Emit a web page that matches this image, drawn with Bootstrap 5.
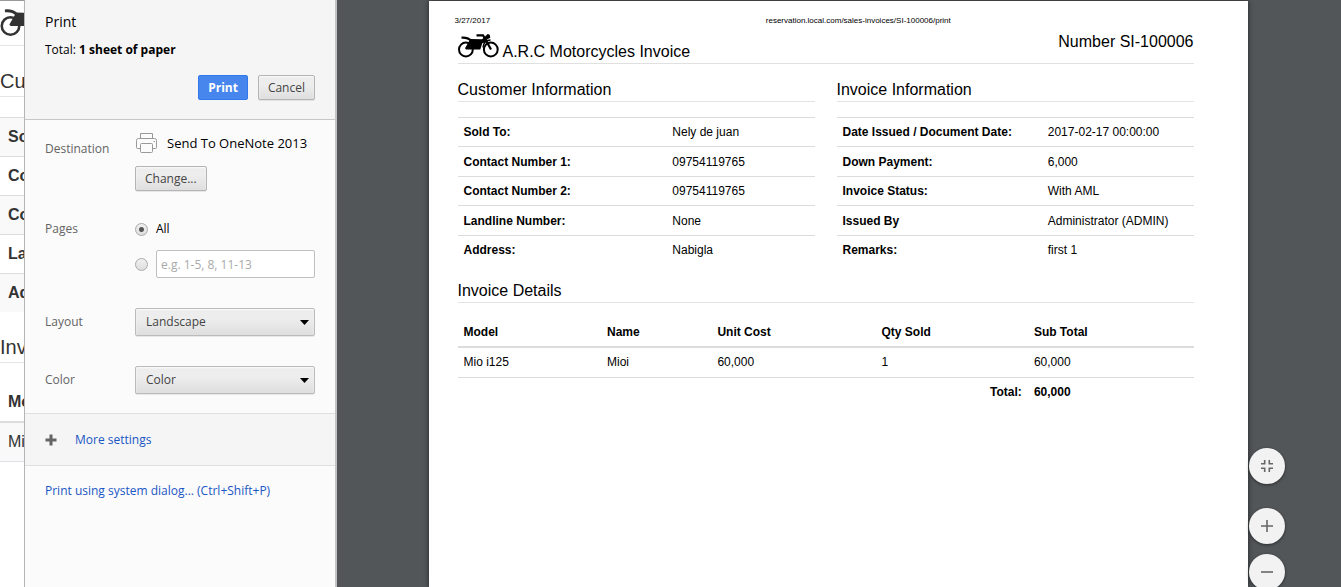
<!DOCTYPE html>
<html lang="en">
<head>
<meta charset="utf-8">
<meta name="viewport" content="width=device-width, initial-scale=1">
<title>Print</title>
<link href="https://cdn.jsdelivr.net/npm/bootstrap@5.3.0/dist/css/bootstrap.min.css" rel="stylesheet">
<style>
  body { font-family: "Open Sans", "Noto Sans", sans-serif; font-size: 12px; line-height: 18px; color: #000; }

  /* Page underneath the dialog */
  .under { width: 25px; border-top: 1px solid #999; border-right: 1px solid #b5b5b5; font-family: "Liberation Sans", sans-serif; color: #333; font-size: 16px; }
  .under-brand { height: 45px; padding-top: 4px; border-bottom: 1px solid #e5e5e5; }
  .under-brand svg { width: 53px; height: 33px; display: block; }
  .under-title { font-size: 20px; line-height: 30px; padding-top: 20px; border-bottom: 1px solid #e5e5e5; font-weight: 400; margin: 0; white-space: nowrap; }
  .under-rows { margin-top: 20px; }
  .under-row { height: 39px; line-height: 38px; padding-left: 8px; border-top: 1px solid #ddd; white-space: nowrap; }
  .under-row.shade { background: #f9f9f9; }
  .under-head { height: 60px; line-height: 38px; padding: 20px 0 0 8px; border-bottom: 2px solid #ddd; white-space: nowrap; }

  /* Print settings */
  .settings { width: 312px; background: #fbfbfb; border-right: 2px solid #c3c3c3; }
  .settings-top { background: #f5f5f5; border-bottom: 1px solid #c8c8c8; height: 120px; padding: 13px 20px 0; }
  .settings-top h1 { font-size: 14px; line-height: 18px; font-weight: 400; margin: 0 0 10px; }
  .actions { gap: 10px; margin-top: 16px; }
  .btn-dlg, .select-dlg { font-size: 12px; border: 1px solid #b4b4b4; border-radius: 2px; color: #444; background-color: #e8e8e8; background-image: linear-gradient(#ededed 38%, #dedede); box-shadow: 0 1px 0 rgba(0,0,0,.08), inset 0 1px 2px rgba(255,255,255,.75); text-align: left; }
  .btn-dlg { height: 25px; line-height: 21px; padding: 1px 9px; }
  .btn-go { font-weight: 700; color: #fff; background: #4787ed; border-color: #3079ed; box-shadow: none; }
  .field { padding: 0 20px; }
  .field-dest { padding-top: 8px; }
  .field-pages { margin-top: 29px; }
  .field-pick { margin-top: 30px; }
  .field-name { width: 90px; color: #646464; }
  .field-body { width: 180px; }
  .select-dlg { height: 28px; line-height: 18px; padding: 4px 10px; border-color: #bbb;
    background-image: url("data:image/svg+xml,%3Csvg xmlns='http://www.w3.org/2000/svg' viewBox='0 0 9 5'%3E%3Cpath d='M0 0h9L4.500 5z'/%3E%3C/svg%3E"), linear-gradient(#ededed 38%, #dedede);
    background-size: 9px 5px, 100% 100%; background-position: right 5px center, 0 0; background-repeat: no-repeat; }
  .radio-dlg { appearance: none; width: 13px; height: 13px; margin: 0; flex: none; border: 1px solid #aaa; border-radius: 50%; background: linear-gradient(#f0f0f0, #dedede); }
  .radio-dlg:checked { background: radial-gradient(circle, #555 0 2px, transparent 3px), linear-gradient(#f0f0f0, #dedede); }
  .range-box { width: 159px; height: 28px; padding: 3px 4px; font-size: 12px; border: 1px solid #bfbfbf; border-radius: 2px; }
  .range-box::placeholder { color: #a9a9a9; }
  .dest-name { font-size: 13px; gap: 9px; }
  .more { background: #f5f5f5; border-top: 1px solid #e0e0e0; border-bottom: 1px solid #e0e0e0; height: 53px; margin-top: 19px; padding: 0 20px; gap: 18px; }
  .settings a { color: #1a56c4; text-decoration: none; }

  /* Preview */
  .preview { background: #525659; padding: 1px 2px 0 0; }
  .sheet { width: 82%; max-width: 819px; background: #fff; box-shadow: 0 0 5px rgba(0,0,0,.6); font-family: "Liberation Sans", sans-serif; padding: 14px 54px 0 29px; }
  .run-head { display: grid; grid-template-columns: 11fr auto 9fr; font-size: 8px; line-height: 11px; margin: 0 -12px 0 -3px; }
  .sheet h2, .sheet h3 { font-size: 16px; line-height: 22px; margin: 0; font-weight: 400; }
  .sheet-brand { border-bottom: 1px solid #e0e0e0; height: 38px; }
  .sheet-brand svg { width: 41px; height: 26px; margin-top: 7px; }
  .sheet-brand span { padding-top: 15px; }
  .sheet-brand .number { padding-top: 5px; }
  .sheet h3 { border-bottom: 1px solid #e4e4e4; }
  .info-row { --bs-gutter-x: 22px; margin-top: 15px; }
  .inv { font-size: 12px; line-height: 18px; width: 100%; margin: 15px 0 0; table-layout: fixed; }
  .inv th, .inv td { padding: 0 6px; vertical-align: middle; }
  .facts { height: 147px; }
  .facts tr { border-top: 1px solid #dcdcdc; }
  .items { margin-top: 14px; }
  .items tr { height: 30px; }
  .items thead tr { border-bottom: 2px solid #dcdcdc; }
  .items tbody tr { border-bottom: 1px solid #dcdcdc; }

  .zoomers { right: 56px; top: 448px; }
  .zoomer { width: 36px; height: 36px; border: 0; border-radius: 50%; background: #f2f2f2; box-shadow: 0 1px 3px rgba(0,0,0,.5); padding: 0; }
  .zoomer + .zoomer { margin-top: 10px; }
  .zoomer.fit { margin-bottom: 14px; }
  .zoomer svg { width: 14px; height: 14px; display: block; margin: auto; }
</style>
</head>
<body>
<svg class="d-none">
  <symbol id="moto" viewBox="0 0 41 26">
    <g fill="none" stroke="currentColor">
      <circle cx="7.900" cy="16.500" r="6.900" stroke-width="2"/>
      <circle cx="32.800" cy="16.500" r="6.900" stroke-width="2"/>
      <path d="M3.500 4.600c4-.3 7 .3 9.500 3" stroke-width="2.200"/>
      <path d="M18.500 2.300h6.500l2 3.200 6 11" stroke-width="2.200"/>
      <path d="M25 14.500c.5-4 3-7.500 7.500-7.500" stroke-width="1.400"/>
    </g>
    <path fill="currentColor" d="M12 6l12 .3 3.300-3 2.400-2.300 2 .8.600 3-3 1.400-2 3-3 1-2 6.300H8l-1-1.200 4.200-7.300z"/>
  </symbol>
</svg>
<div class="d-flex vh-100 overflow-hidden">

  <div class="under flex-shrink-0 overflow-hidden">
    <div class="under-brand"><svg aria-hidden="true"><use href="#moto"/></svg></div>
    <h2 class="under-title">Cu</h2>
    <div class="under-rows fw-bold">
      <div class="under-row shade">So</div>
      <div class="under-row">Co</div>
      <div class="under-row shade">Co</div>
      <div class="under-row">La</div>
      <div class="under-row shade">Ad</div>
    </div>
    <h2 class="under-title">Inv</h2>
    <div class="under-head fw-bold">Mo</div>
    <div class="under-row shade border-top-0 border-bottom">Mi</div>
  </div>

  <form class="settings flex-shrink-0" onsubmit="return false">
    <div class="settings-top">
      <h1>Print</h1>
      <div>Total: <b>1 sheet of paper</b></div>
      <div class="actions d-flex justify-content-end">
        <button type="submit" class="btn btn-dlg btn-go">Print</button>
        <button type="button" class="btn btn-dlg">Cancel</button>
      </div>
    </div>

    <div class="field field-dest d-flex align-items-start">
      <div class="field-name pt-2 mt-1">Destination</div>
      <div class="field-body">
        <div class="dest-name d-flex align-items-center mb-2 pt-1">
          <svg width="23" height="22" viewBox="0 0 23 22" fill="#fbfbfb" stroke="#999" aria-hidden="true">
            <path d="M5.500 6.500v-5h12v5"/>
            <path d="M5.500 16.500h-3a1 1 0 0 1-1-1v-7q0-2 2-2h16q2 0 2 2v7a1 1 0 0 1-1 1h-3"/>
            <rect x="5.500" y="11.500" width="12" height="9" rx="1"/>
            <path d="M18.500 9.500h1.500"/>
          </svg>
          Send To OneNote 2013
        </div>
        <button type="button" class="btn btn-dlg mt-1">Change...</button>
      </div>
    </div>

    <div class="field field-pages d-flex">
      <div class="field-name">Pages</div>
      <div class="field-body">
        <div class="d-flex align-items-center gap-2">
          <input class="radio-dlg" type="radio" name="pages" id="all" checked>
          <label for="all">All</label>
        </div>
        <div class="d-flex align-items-center gap-2 mt-2 pt-1">
          <input class="radio-dlg" type="radio" name="pages" id="some" aria-label="Page range">
          <input class="form-control range-box" type="text" placeholder="e.g. 1-5, 8, 11-13" aria-label="Pages to print">
        </div>
      </div>
    </div>

    <div class="field field-pick d-flex align-items-center">
      <label class="field-name" for="layout">Layout</label>
      <select class="form-select select-dlg field-body" id="layout"><option>Landscape</option><option>Portrait</option></select>
    </div>
    <div class="field field-pick d-flex align-items-center">
      <label class="field-name" for="color">Color</label>
      <select class="form-select select-dlg field-body" id="color"><option>Color</option><option>Black and white</option></select>
    </div>

    <div class="more d-flex align-items-center">
      <svg width="12" height="12" viewBox="0 0 12 12" aria-hidden="true"><path d="M6 .500v11M.500 6h11" stroke="#646464" stroke-width="3"/></svg>
      <a href="#more">More settings</a>
    </div>
    <div class="field mt-3"><a href="#system">Print using system dialog... (Ctrl+Shift+P)</a></div>
  </form>

  <main class="preview flex-grow-1 d-flex justify-content-center position-relative">
    <article class="sheet">
      <div class="run-head"><span>3/27/2017</span><span>reservation.local.com/sales-invoices/SI-100006/print</span></div>
      <header class="sheet-brand d-flex justify-content-between">
        <h2 class="d-flex align-items-start gap-1"><svg aria-hidden="true"><use href="#moto"/></svg><span>A.R.C Motorcycles Invoice</span></h2>
        <h2 class="number">Number SI-100006</h2>
      </header>
      <div class="row info-row">
        <section class="col-6">
          <h3>Customer Information</h3>
          <table class="inv facts">
            <colgroup><col style="width:58.500%"><col></colgroup>
            <tr><th scope="row">Sold To:</th><td>Nely de juan</td></tr>
            <tr><th scope="row">Contact Number 1:</th><td>09754119765</td></tr>
            <tr><th scope="row">Contact Number 2:</th><td>09754119765</td></tr>
            <tr><th scope="row">Landline Number:</th><td>None</td></tr>
            <tr><th scope="row">Address:</th><td>Nabigla</td></tr>
          </table>
        </section>
        <section class="col-6">
          <h3>Invoice Information</h3>
          <table class="inv facts">
            <colgroup><col style="width:57.500%"><col></colgroup>
            <tr><th scope="row">Date Issued / Document Date:</th><td>2017-02-17 00:00:00</td></tr>
            <tr><th scope="row">Down Payment:</th><td>6,000</td></tr>
            <tr><th scope="row">Invoice Status:</th><td>With AML</td></tr>
            <tr><th scope="row">Issued By</th><td>Administrator (ADMIN)</td></tr>
            <tr><th scope="row">Remarks:</th><td>first 1</td></tr>
          </table>
        </section>
      </div>
      <h3 class="mt-3">Invoice Details</h3>
      <table class="inv items">
        <colgroup><col style="width:19.500%"><col style="width:15%"><col style="width:22.300%"><col style="width:20.700%"><col></colgroup>
        <thead><tr><th>Model</th><th>Name</th><th>Unit Cost</th><th>Qty Sold</th><th>Sub Total</th></tr></thead>
        <tbody><tr><td>Mio i125</td><td>Mioi</td><td>60,000</td><td>1</td><td>60,000</td></tr></tbody>
        <tfoot><tr><th colspan="4" class="text-end">Total:</th><th>60,000</th></tr></tfoot>
      </table>
    </article>

    <div class="zoomers position-absolute d-flex flex-column">
      <button type="button" class="zoomer fit" aria-label="Fit to page"><svg viewBox="0 0 14 14" fill="none" stroke="#666" stroke-width="1.600"><path d="M1 4.700h3.700V1M9.300 1v3.700H13M1 9.300h3.700V13M9.300 13V9.300H13"/></svg></button>
      <button type="button" class="zoomer" aria-label="Zoom in"><svg viewBox="0 0 14 14" stroke="#666" stroke-width="1.600"><path d="M7 1v12M1 7h12"/></svg></button>
      <button type="button" class="zoomer" aria-label="Zoom out"><svg viewBox="0 0 14 14" stroke="#666" stroke-width="1.600"><path d="M1 7h12"/></svg></button>
    </div>
  </main>
</div>
<script src="https://cdn.jsdelivr.net/npm/bootstrap@5.3.0/dist/js/bootstrap.bundle.min.js"></script>
</body>
</html>
